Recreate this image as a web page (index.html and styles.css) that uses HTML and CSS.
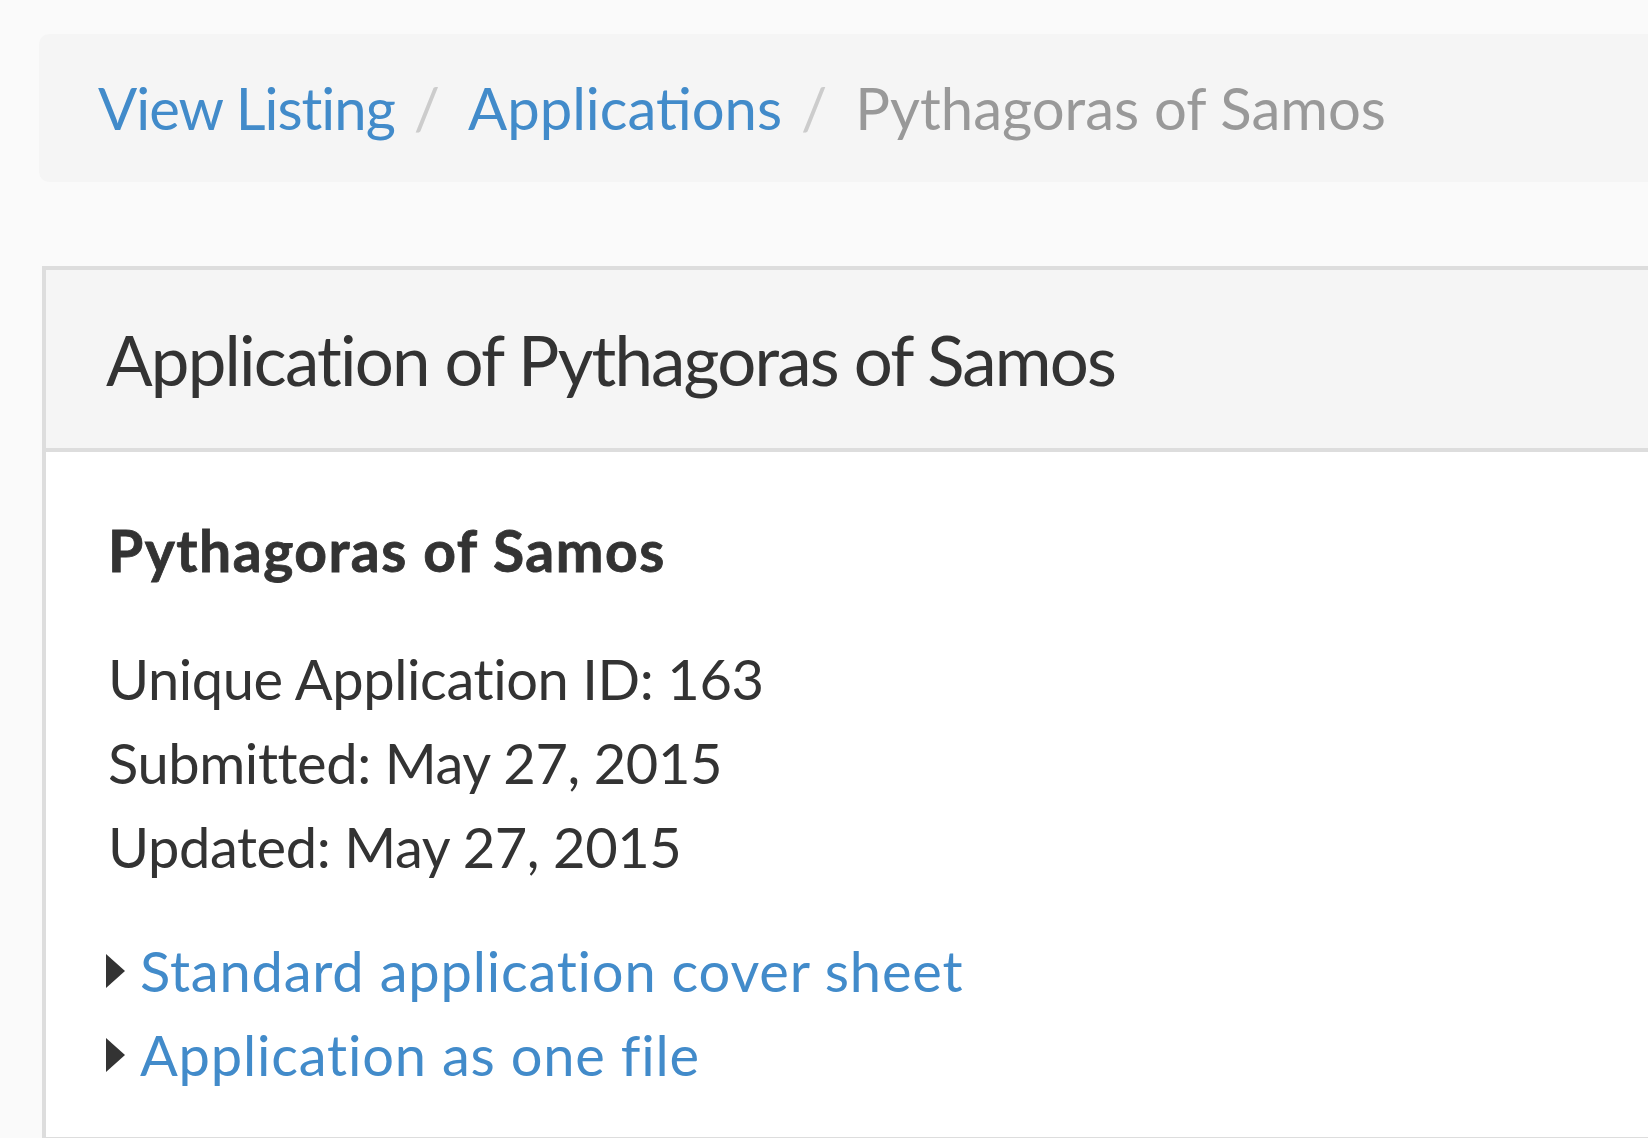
FILE: index.html
```html
<!DOCTYPE html>
<html lang="en">
<head>
    <meta charset="UTF-8">
    <meta name="viewport" content="width=device-width, initial-scale=1.0">
    <title>Application of Pythagoras of Samos</title>
    <link rel="stylesheet" href="styles.css">
</head>
<body>
    <div class="page">
        <ol class="breadcrumb">
            <li class="first"><a href="#">View Listing</a></li>
            <li><a href="#">Applications</a></li>
            <li class="active">Pythagoras of Samos</li>
        </ol>

        <div class="panel">
            <div class="panel-heading">
                <h3 class="panel-title">Application of Pythagoras of Samos</h3>
            </div>
            <div class="panel-body">
                <h4 class="applicant">Pythagoras of Samos</h4>
                <p class="meta">
                    Unique Application ID: 163<br>
                    Submitted: May 27, 2015<br>
                    Updated: May 27, 2015
                </p>
                <details class="doc">
                    <summary><a href="#">Standard application cover sheet</a></summary>
                </details>
                <details class="doc">
                    <summary><a href="#">Application as one file</a></summary>
                </details>
            </div>
        </div>
    </div>
</body>
</html>
```

FILE: styles.css
```css
html, body {
    margin: 0;
    padding: 0;
    overflow: hidden;
}
body {
    font-family: Lato, "Open Sans", sans-serif;
    background-color: #fafafa;
    color: #333;
}
a {
    color: #428bca;
    text-decoration: none;
}
.page {
    padding-top: 34px;
    margin-right: -60px;
}
.breadcrumb {
    display: flex;
    align-items: center;
    list-style: none;
    margin: 0 0 84px 39px;
    padding: 0 0 2px 59px;
    height: 146px;
    background-color: #f5f5f5;
    border-radius: 10px;
    font-size: 58px;
}
.breadcrumb .first {
    letter-spacing: -1px;
}
.breadcrumb li + li::before {
    content: "/";
    color: #ccc;
    padding: 0 28px 0 19px;
}
.breadcrumb .active {
    color: #999;
}
.panel {
    margin-left: 42px;
    background-color: #fff;
    border: 4px solid #ddd;
    border-right: none;
}
.panel-heading {
    display: flex;
    align-items: center;
    height: 178px;
    padding-left: 60px;
    background-color: #f5f5f5;
    border-bottom: 4px solid #ddd;
}
.panel-title {
    margin: 0;
    font-size: 69px;
    font-weight: normal;
    letter-spacing: -1.8px;
    color: #333;
}
.panel-body {
    padding: 56px 0 40px 62px;
    font-size: 56px;
    line-height: 84px;
}
.applicant {
    margin: 0 0 45px;
    font-size: 57px;
    font-weight: bold;
    letter-spacing: 1.5px;
    -webkit-text-stroke: 0.8px #333;
}
.meta {
    margin: 0 0 40px;
    letter-spacing: -0.4px;
}
.doc summary {
    list-style: none;
    margin-left: -2px;
}
.doc summary::-webkit-details-marker {
    display: none;
}
.doc summary::before {
    content: "";
    display: inline-block;
    width: 0;
    height: 0;
    margin: 0 15px 4px 0;
    border-left: 19px solid #333;
    border-top: 17px solid transparent;
    border-bottom: 17px solid transparent;
}
.doc a {
    letter-spacing: 0.8px;
}
```
